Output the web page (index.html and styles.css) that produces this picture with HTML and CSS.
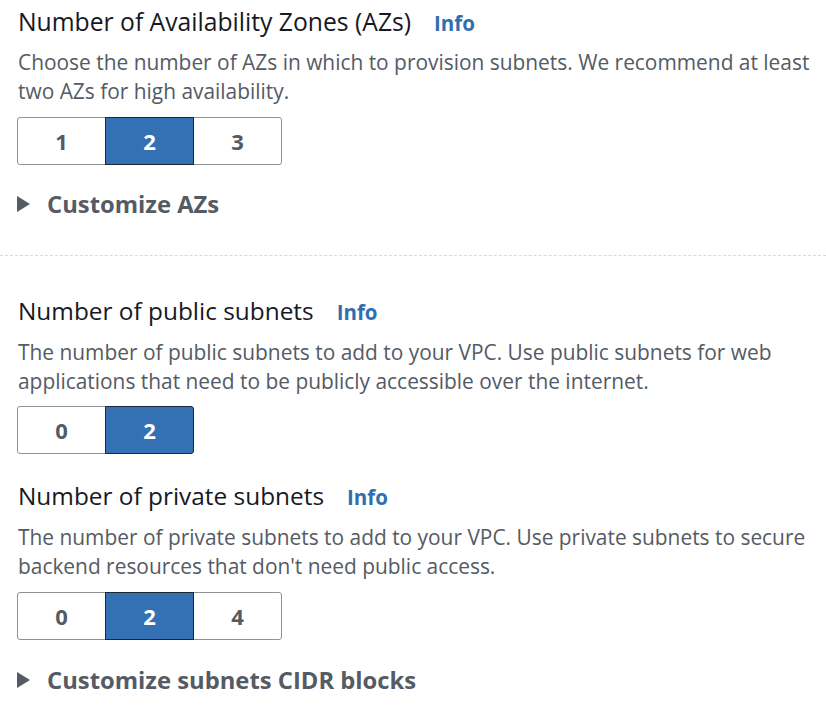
FILE: index.html
```html
<!DOCTYPE html>
<html>
<head>
<meta charset="utf-8">
<link rel="stylesheet" href="styles.css">
</head>
<body>
<div class="page">
  <section class="field field-azs">
    <div class="label-row"><span class="label">Number of Availability Zones (AZs)</span><a class="info">Info</a></div>
    <p class="desc">Choose the number of AZs in which to provision subnets. We recommend at least two AZs for high availability.</p>
    <div class="seg">
      <button class="seg-btn">1</button><button class="seg-btn active">2</button><button class="seg-btn">3</button>
    </div>
    <div class="expander"><span class="caret"></span><span class="exp-text">Customize AZs</span></div>
  </section>
  <hr class="divider">
  <section class="field field-public">
    <div class="label-row"><span class="label">Number of public subnets</span><a class="info">Info</a></div>
    <p class="desc">The number of public subnets to add to your VPC. Use public subnets for web applications that need to be publicly accessible over the internet.</p>
    <div class="seg">
      <button class="seg-btn">0</button><button class="seg-btn active">2</button>
    </div>
  </section>
  <section class="field field-private">
    <div class="label-row"><span class="label">Number of private subnets</span><a class="info">Info</a></div>
    <p class="desc">The number of private subnets to add to your VPC. Use private subnets to secure backend resources that don't need public access.</p>
    <div class="seg">
      <button class="seg-btn">0</button><button class="seg-btn active">2</button><button class="seg-btn">4</button>
    </div>
    <div class="expander"><span class="caret"></span><span class="exp-text">Customize subnets CIDR blocks</span></div>
  </section>
</div>
</body>
</html>
```

FILE: styles.css
```css
* { box-sizing: border-box; }
html, body { margin: 0; padding: 0; background: #fff; }
body { font-family: "Open Sans", "Noto Sans", sans-serif; }
.page { padding: 5px 0 0 18px; width: 826px; }
.field { display: flex; flex-direction: column; }
.label-row { display: flex; align-items: baseline; gap: 23px; height: 34px; line-height: 34px; }
.label { font-size: 24.4px; color: #16191f; }
.field-azs .label { font-size: 24.7px; }
.info { font-size: 20.5px; font-weight: 700; color: #2f6eb0; }
.desc { margin: 10px 0 0; font-size: 20.9px; line-height: 29px; color: #545b64; width: 810px; }
.field-azs .desc { margin-top: 9px; }
.seg { display: flex; margin: 11px 0 0 -1px; }
.field-public .seg { margin-top: 10px; }
.seg-btn { width: 89px; height: 48px; background: #fff; border: 1px solid #8d9399; margin-left: -1px; font-family: inherit; font-size: 22px; font-weight: 700; color: #545b64; padding: 0; }
.seg-btn:first-child { margin-left: 0; border-radius: 3px 0 0 3px; }
.seg-btn:last-child { border-radius: 0 3px 3px 0; }
.seg-btn.active { background: #3470b4; color: #fff; border-color: #1d2733; position: relative; z-index: 1; }
.expander { display: flex; align-items: center; margin-top: 22px; height: 34px; }
.field-private .expander { margin-top: 23px; }
.caret { width: 0; height: 0; border-left: 13px solid #545b64; border-top: 8px solid transparent; border-bottom: 8px solid transparent; margin-left: -1px; }
.exp-text { margin-left: 17px; font-size: 23.8px; font-weight: 700; color: #545b64; }
.divider { border: 0; border-top: 1px dashed #d5dbdb; margin: 34px 0 0 -18px; width: 826px; }
.field-public { margin-top: 38px; }
.field-private { margin-top: 25px; }
```
